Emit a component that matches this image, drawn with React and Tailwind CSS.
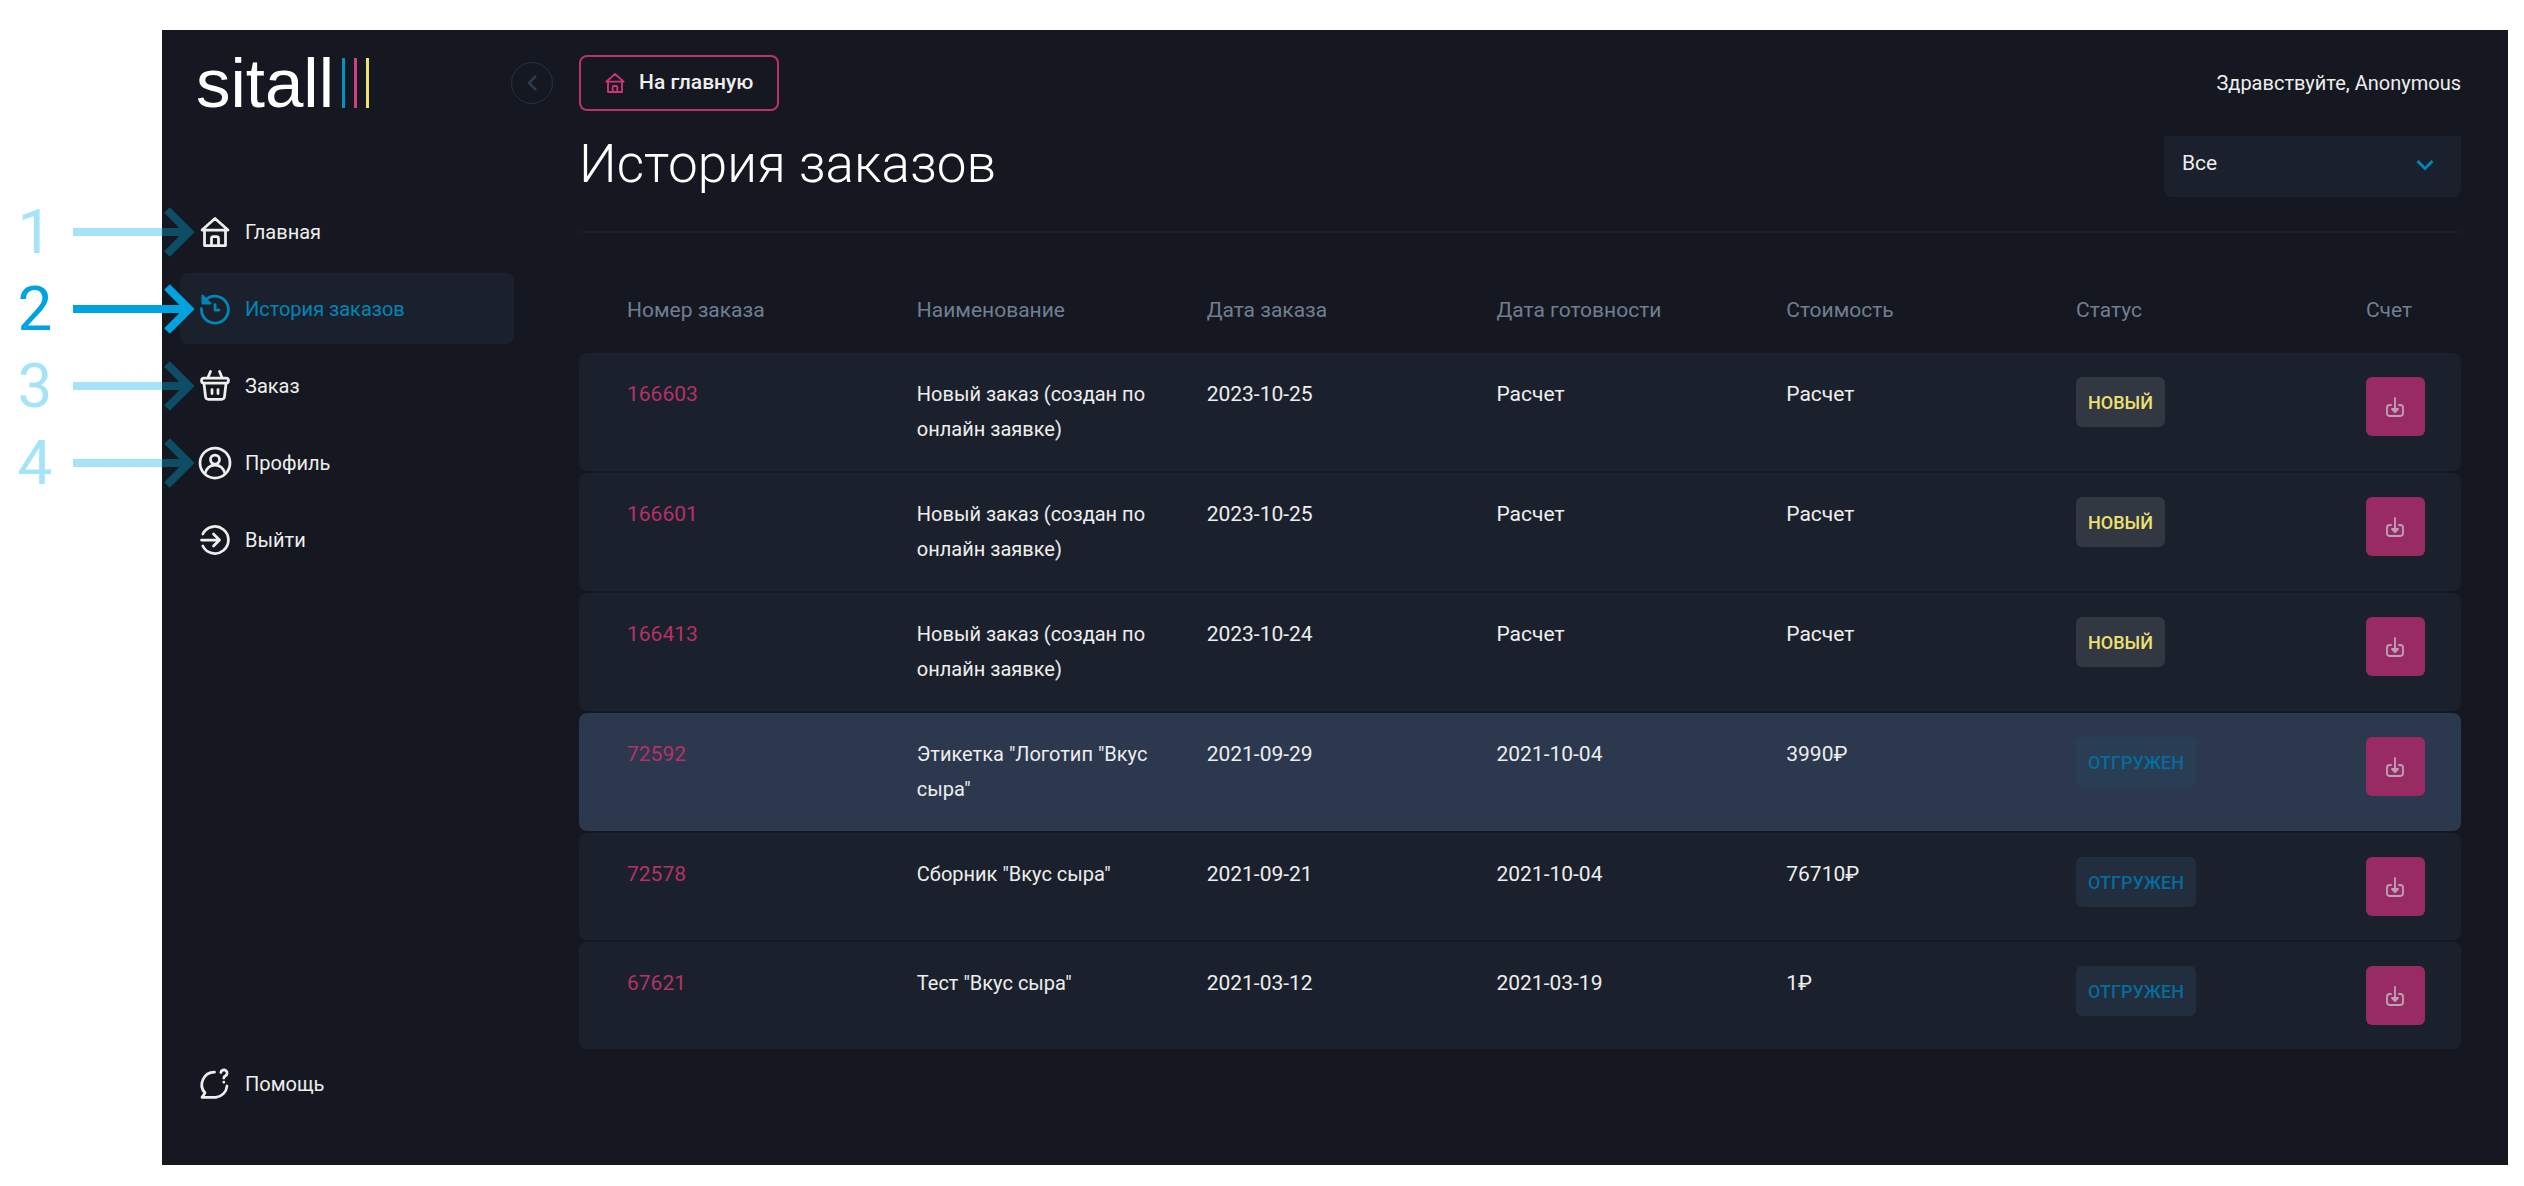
import { useState } from 'react';

const orders = [
  { id: '166603', name: 'Новый заказ (создан по онлайн заявке)', ordered: '2023-10-25', ready: 'Расчет', price: 'Расчет', status: 'Новый' },
  { id: '166601', name: 'Новый заказ (создан по онлайн заявке)', ordered: '2023-10-25', ready: 'Расчет', price: 'Расчет', status: 'Новый' },
  { id: '166413', name: 'Новый заказ (создан по онлайн заявке)', ordered: '2023-10-24', ready: 'Расчет', price: 'Расчет', status: 'Новый' },
  { id: '72592', name: 'Этикетка "Логотип "Вкус сыра"', ordered: '2021-09-29', ready: '2021-10-04', price: '3990₽', status: 'Отгружен' },
  { id: '72578', name: 'Сборник "Вкус сыра"', ordered: '2021-09-21', ready: '2021-10-04', price: '76710₽', status: 'Отгружен' },
  { id: '67621', name: 'Тест "Вкус сыра"', ordered: '2021-03-12', ready: '2021-03-19', price: '1₽', status: 'Отгружен' },
];

const columns = ['Номер заказа', 'Наименование', 'Дата заказа', 'Дата готовности', 'Стоимость', 'Статус', 'Счет'];

function Icon({ className, children }) {
  return (
    <svg
      viewBox="0 0 30 30"
      className={className}
      fill="none"
      stroke="currentColor"
      strokeWidth="2.75"
      strokeLinecap="round"
      strokeLinejoin="round"
      overflow="visible"
      aria-hidden="true"
    >
      {children}
    </svg>
  );
}

function HomeIcon({ className }) {
  return (
    <Icon className={className}>
      <path d="M2 13 15 1.500 28 13zM4.500 13V28.500h21V13M11.500 28.500V21.500a2 2 0 0 1 2-2h3a2 2 0 0 1 2 2v7" />
    </Icon>
  );
}

function HistoryIcon({ className }) {
  return (
    <Icon className={className}>
      <path d="M1.500 14.500A13.500 13.500 0 1 0 5.500 6" />
      <path d="M2.500 1.500V9.500H10.500L6 5.500z" fill="currentColor" strokeWidth="2" />
      <path d="M15 10.500V16h4" />
    </Icon>
  );
}

function BasketIcon({ className }) {
  return (
    <Icon className={className}>
      <path d="M10.500 .5 8 6.500M19.500 .5 22 6.500" />
      <rect x="1.500" y="7" width="27" height="5" rx="2.500" />
      <path d="M4 12.500l1.500 13a3 3 0 0 0 3 2.800h13a3 3 0 0 0 3-2.800l1.500-13M12 18.500V22.500M18 18.500V22.500" />
    </Icon>
  );
}

function ProfileIcon({ className }) {
  return (
    <Icon className={className}>
      <circle cx="15" cy="15" r="15" />
      <circle cx="15" cy="11.500" r="4.500" />
      <path d="M5 25.500c1.500-5.500 5-8.500 10-8.500s8.500 3 10 8.500" />
    </Icon>
  );
}

function LogoutIcon({ className }) {
  return (
    <Icon className={className}>
      <path d="M2.800 9a13.500 13.500 0 1 1 0 12M1.500 15H19M13.500 9 19.500 15l-6 6" />
    </Icon>
  );
}

function HelpIcon({ className }) {
  return (
    <Icon className={className}>
      <path d="M14.500 3.200A12.500 12.500 0 0 0 5 24l-3 4.300H16A12.500 12.500 0 0 0 27 17" />
      <path d="M20.800 3.500a3.200 3.200 0 1 1 4.500 3.500c-1 .5-1.500 1-1.500 2M23.800 13v.2" />
    </Icon>
  );
}

function DownloadIcon({ className }) {
  return (
    <Icon className={className}>
      <path d="M9 12H7a4 4 0 0 0-4 4v8.500a4 4 0 0 0 4 4h16a4 4 0 0 0 4-4V16a4 4 0 0 0-4-4h-2" />
      <path d="M15 1.500V20" />
      <path d="M10.500 18 15 22.500l4.500-4.500z" fill="currentColor" />
    </Icon>
  );
}

const menu = [
  { label: 'Главная', icon: HomeIcon, step: 1 },
  { label: 'История заказов', icon: HistoryIcon, step: 2 },
  { label: 'Заказ', icon: BasketIcon, step: 3 },
  { label: 'Профиль', icon: ProfileIcon, step: 4 },
  { label: 'Выйти', icon: LogoutIcon },
];

// Numbered pointer that starts left of the panel and ends at the menu icon
function Pointer({ step, active }) {
  return (
    <div
      className={`absolute top-0 -left-[163px] h-full flex items-center gap-5 pointer-events-none ${
        active ? 'text-[#00a3e0]' : 'text-[#00b2e8] opacity-35'
      }`}
    >
      <span className="w-9 text-center text-[62px] leading-none">{step}</span>
      <svg viewBox="0 0 122 50" className="w-[122px] h-[50px]" fill="none" stroke="currentColor" strokeWidth="8" aria-hidden="true">
        <path d="M0 25H116M94 3l22 22-22 22" />
      </svg>
    </div>
  );
}

function Sidebar({ current, onSelect }) {
  return (
    <aside className="w-[370px] shrink-0 flex flex-col px-[18px] text-[20px]">
      <div className="flex items-center h-[106px] pl-4">
        <a href="#" className="flex items-center gap-2 text-white">
          <span className="font-['Liberation_Sans',sans-serif] text-[69px] leading-none">sitall</span>
          <span className="flex gap-[9px]">
            <span className="w-[3px] h-[50px] bg-[#0093c4]" />
            <span className="w-[3px] h-[50px] bg-[#d23f7c]" />
            <span className="w-[3px] h-[50px] bg-[#f4e06f]" />
          </span>
        </a>
      </div>

      <nav className="mt-[60px]">
        <ul className="flex flex-col gap-1.5">
          {menu.map(({ label, icon: MenuIcon, step }) => (
            <li key={label} className="relative">
              <a
                href="#"
                onClick={() => onSelect(label)}
                className={`flex items-center gap-[15px] h-[71px] px-5 rounded-lg ${
                  current === label ? 'bg-[#1b212c] text-[#0086b8]' : 'text-[#eeeeee]'
                }`}
              >
                <MenuIcon className="size-[30px]" />
                {label}
              </a>
              {step && <Pointer step={step} active={current === label} />}
            </li>
          ))}
        </ul>
      </nav>

      <a href="#" className="flex items-center gap-[15px] h-[71px] px-5 mt-auto mb-[46px] text-[#eeeeee]">
        <HelpIcon className="size-[30px]" />
        Помощь
      </a>
    </aside>
  );
}

function OrdersTable() {
  return (
    <table className="w-full table-fixed border-separate border-spacing-x-0 border-spacing-y-[2px] text-left leading-[35px]">
      <thead>
        <tr className="text-[#6f7f92]">
          {columns.map((column, index) => (
            <th
              key={column}
              scope="col"
              className={`h-[84px] p-0 pt-0.5 pl-12 font-normal whitespace-nowrap ${index === 6 ? 'w-[7.6%]' : 'w-[15.4%]'}`}
            >
              {column}
            </th>
          ))}
        </tr>
      </thead>
      <tbody>
        {orders.map((order) => {
          const highlighted = order.id === '72592';
          return (
            <tr
              key={order.id}
              className={`align-top [&>td]:py-6 [&>td]:pl-12 ${
                highlighted ? '[&>td]:bg-[#2b384e]' : '[&>td]:bg-[#1b212c]'
              }`}
            >
              <td className="rounded-l-lg">
                <a href="#" className="text-[#b63069]">{order.id}</a>
              </td>
              <td className="text-[20px]">{order.name}</td>
              <td>{order.ordered}</td>
              <td>{order.ready}</td>
              <td>{order.price}</td>
              <td>
                <span
                  className={`flex items-center w-fit h-[50px] px-3 rounded-md text-[18px] font-medium uppercase ${
                    order.status === 'Новый'
                      ? 'bg-[#313842] text-[#eee06f]'
                      : highlighted
                        ? 'bg-[#293e54] text-[#066c9b]'
                        : 'bg-[#222d3e] text-[#066c9b]'
                  }`}
                >
                  {order.status}
                </span>
              </td>
              <td className="rounded-r-lg">
                <button
                  type="button"
                  aria-label={`Скачать счет ${order.id}`}
                  className="flex items-center justify-center size-[59px] rounded-md bg-[#982b64] text-[#b9a3b3]"
                >
                  <DownloadIcon className="size-5" />
                </button>
              </td>
            </tr>
          );
        })}
      </tbody>
    </table>
  );
}

export default function App() {
  const [current, setCurrent] = useState('История заказов');

  return (
    <div className="min-h-screen flex bg-white pt-[30px] pb-[21px] pl-[162px] pr-4 font-[Roboto,sans-serif] text-[21px] text-[#eeeeee]">
      <div className="flex flex-1 min-w-0 bg-[#151820]">
        <Sidebar current={current} onSelect={setCurrent} />

        <button
          type="button"
          aria-label="Свернуть меню"
          className="flex items-center justify-center shrink-0 size-[42px] mt-8 -ml-[21px] rounded-full border border-[#243244] text-[#2b3c50]"
        >
          <svg viewBox="0 0 10 16" className="w-2.5 h-4" fill="none" stroke="currentColor" strokeWidth="2.500" aria-hidden="true">
            <path d="M9 1 2 8l7 7" />
          </svg>
        </button>

        <main className="flex-1 min-w-0 pl-[26px] pr-[47px]">
          <div className="flex items-center justify-between pt-[25px]">
            <a
              href="#"
              className="flex items-center gap-3.5 h-14 px-6 rounded-lg border-2 border-[#b9326c] font-medium"
            >
              <HomeIcon className="size-5 text-[#d0357a]" />
              На главную
            </a>
            <p className="text-[20px]">Здравствуйте, Anonymous</p>
          </div>

          <div className="flex items-start justify-between h-[122px] pt-[25px] border-b-2 border-[#191e28]">
            <h1 className="text-[53px] leading-[56px] font-light text-white">История заказов</h1>
            <div className="relative">
              <select
                aria-label="Статус заказа"
                className="appearance-none w-[297px] h-[61px] pl-[18px] pb-1.5 rounded-b-lg bg-[#1b212c] text-[#eeeeee]"
              >
                <option>Все</option>
                <option>Новый</option>
                <option>Отгружен</option>
              </select>
              <svg
                viewBox="0 0 18 12"
                className="absolute right-[27px] top-[23px] w-[18px] h-3 text-[#0086b8] pointer-events-none"
                fill="none"
                stroke="currentColor"
                strokeWidth="3"
                aria-hidden="true"
              >
                <path d="M1.500 2 9 9.500 16.500 2" />
              </svg>
            </div>
          </div>

          <div className="pt-8">
            <OrdersTable />
          </div>
        </main>
      </div>
    </div>
  );
}
